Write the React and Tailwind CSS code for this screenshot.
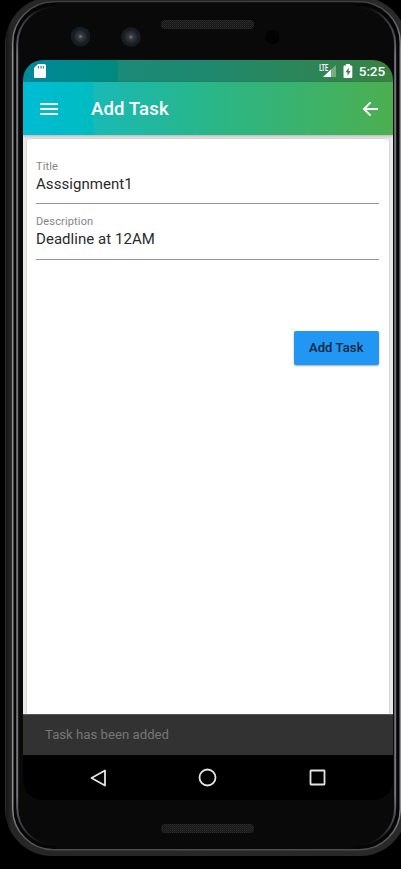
import React from "react";

function Bezel() {
  return (
    <svg className="absolute inset-0" width="401" height="869" viewBox="0 0 401 869" fill="none" aria-hidden="true">
      <defs>
        <linearGradient id="shell" x1="5" x2="411" y1="0" y2="0" gradientUnits="userSpaceOnUse">
          <stop offset="0" stopColor="#303030" />
          <stop offset="0.004" stopColor="#171717" />
          <stop offset="0.016" stopColor="#262626" />
          <stop offset="0.98" stopColor="#292929" />
          <stop offset="1" stopColor="#161616" />
        </linearGradient>
        <linearGradient id="rim" x1="0" x2="0" y1="0" y2="855" gradientUnits="userSpaceOnUse">
          <stop offset="0" stopColor="#3c3c3c" />
          <stop offset="0.01" stopColor="#4a4a4a" />
          <stop offset="0.06" stopColor="#929292" />
          <stop offset="0.94" stopColor="#929292" />
          <stop offset="0.985" stopColor="#555555" />
          <stop offset="1" stopColor="#484848" />
        </linearGradient>
        <linearGradient id="glass" x1="0" x2="0" y1="6" y2="846" gradientUnits="userSpaceOnUse">
          <stop offset="0" stopColor="#55555f" stopOpacity="0" />
          <stop offset="0.015" stopColor="#55555f" stopOpacity="0.6" />
          <stop offset="0.06" stopColor="#74747e" />
          <stop offset="0.94" stopColor="#74747e" />
          <stop offset="0.98" stopColor="#55555f" stopOpacity="0.6" />
          <stop offset="1" stopColor="#55555f" stopOpacity="0" />
        </linearGradient>
        <radialGradient id="lens">
          <stop offset="0" stopColor="#777b80" />
          <stop offset="0.25" stopColor="#35383d" />
          <stop offset="0.55" stopColor="#272a2e" />
          <stop offset="0.7" stopColor="#191e24" />
          <stop offset="1" stopColor="#141c23" />
        </radialGradient>
        <pattern id="mesh" width="2" height="2" patternUnits="userSpaceOnUse">
          <rect width="2" height="2" fill="#181818" />
          <rect width="1" height="1" fill="#2c2c2c" />
          <rect x="1" y="1" width="1" height="1" fill="#222222" />
        </pattern>
      </defs>
      <rect x="5" y="-3" width="402" height="859" rx="47" fill="url(#shell)" />
      <rect x="12.7" y="1.7" width="387.6" height="848" rx="41" fill="#050505" stroke="url(#rim)" strokeWidth="1.5" />
      <rect x="17.2" y="6.5" width="378" height="839" rx="38" fill="#090909" stroke="url(#glass)" strokeWidth="2" />
      <path d="M55 2.5H355V10H55zM55 840H355V849H55z" fill="#090909" />
      <circle cx="80.500" cy="36.500" r="9.800" fill="url(#lens)" />
      <circle cx="131" cy="37" r="9.800" fill="url(#lens)" />
      <circle cx="272.500" cy="37" r="7" fill="#020204" />
      <rect x="161" y="20" width="93" height="9" rx="4" fill="url(#mesh)" />
      <rect x="161" y="824" width="93" height="9" rx="4" fill="url(#mesh)" />
    </svg>
  );
}

function StatusBar() {
  return (
    <div className="flex h-[22px] shrink-0 items-center bg-[linear-gradient(90deg,#00899b_0%,#008a7e_25.5%,#1b8a79_25.6%,#1f896e_50%,#388243_100%)] pr-2 pl-[11px]">
      <svg width="12" height="14" viewBox="0 0 12 14">
        <path d="M4 0h6.500Q12 0 12 1.500v11Q12 14 10.500 14h-9Q0 14 0 12.500V4z" fill="#fff" />
        <path d="M4.500 2v2.500M7 2v2.500M9.300 2v2.500" stroke="#238b91" strokeWidth="1.100" />
      </svg>
      <svg className="ml-auto" width="18" height="14" viewBox="0 0 18 14">
        <path d="M17 1v12H4z" fill="#78ad84" />
        <path d="M12 5.600V13H4z" fill="#fff" />
        <path d="M0 0h9.500v7H0z" fill="#2f8556" />
        <text x="0.200" y="6.800" fill="#fff" fontFamily="Roboto, sans-serif" fontSize="9" fontWeight="700" textLength="9" lengthAdjust="spacingAndGlyphs">LTE</text>
      </svg>
      <svg className="ml-[6px]" width="10" height="14" viewBox="0 0 10 14">
        <path d="M3 0h4v1.400h1.300q1 0 1 1V13q0 1-1 1H1.500q-1 0-1-1V2.400q0-1 1-1H3z" fill="#fff" />
        <path d="M5.800 3.500L2.500 8.300h2v3.600L7.600 7h-2z" fill="#348450" />
      </svg>
      <span className="ml-[6px] text-[13.5px] leading-[22px] font-medium tracking-[-0.1px] text-white">5:25</span>
    </div>
  );
}

function Header() {
  return (
    <header className="relative z-10 flex h-[53px] shrink-0 items-center bg-[linear-gradient(90deg,#00bcd4_0%,#00bcc0_19%,#19b9b5_19.1%,#29b689_50%,#4caf50_100%)] pr-[14px] pl-[17px] shadow-[0_1px_3px_rgba(0,0,0,0.25)]">
      <svg width="18" height="12" viewBox="0 0 18 12">
        <path d="M0 1h18M0 6h18M0 11h18" stroke="#fff" strokeWidth="1.900" />
      </svg>
      <h1 className="ml-[33px] text-[18.6px] leading-6 font-medium tracking-[0.1px] text-white">Add Task</h1>
      <svg className="ml-auto" width="17" height="16" viewBox="0 0 17 16" fill="none">
        <path d="M16 8H2.500M8.600 1.400L2 8l6.600 6.600" stroke="#fff" strokeWidth="1.900" />
      </svg>
    </header>
  );
}

function Field({ label, value, labelClass, valueClass }) {
  return (
    <label className="block h-[55px]">
      <span className={"block text-[11px] leading-[14px] text-[#858585] " + labelClass}>{label}</span>
      <span className={"block border-b border-[#949494] text-[15px] leading-[20px] text-[#2b2b2b] " + valueClass}>{value}</span>
    </label>
  );
}

export default function App() {
  return (
    <div className="relative h-[869px] w-[401px] overflow-hidden bg-black font-['Roboto',sans-serif]">
      <Bezel />
      <main className="relative mt-[60px] ml-[23px] flex h-[740px] w-[370px] flex-col overflow-hidden rounded-[20px]">
        <StatusBar />
        <Header />
        <div className="flex flex-1 flex-col bg-[#e9e9e9] pt-1 pr-[4px] pl-[3.5px]">
          <section className="flex-1 rounded-t-[3px] bg-white pt-[21px] pr-[10px] pl-[9.5px] shadow-[0_0_2px_rgba(0,0,0,0.25)]">
            <Field label="Title" value="Asssignment1" labelClass="tracking-[0.1px]" valueClass="h-[30px] tracking-[0.05px]" />
            <Field label="Description" value="Deadline at 12AM" labelClass="tracking-[0.15px]" valueClass="h-[31px] tracking-[0.05px]" />
            <button className="mt-[61px] ml-auto block h-[34px] w-[85.5px] rounded-[2px] bg-[#2196f3] text-[13px] font-medium tracking-[0.1px] text-[#10243a] shadow-[0_1px_2px_rgba(0,0,0,0.35)]">Add Task</button>
          </section>
        </div>
        <div className="relative flex h-[41px] shrink-0 items-center border-t border-[#555] bg-[#323232] pl-[22px] text-[13.2px] text-[#767676]">Task has been added</div>
        <nav className="flex h-[45px] shrink-0 items-center bg-black pr-[67px] pl-[67px]">
          <svg width="16" height="18" viewBox="0 0 16 18" fill="none">
            <path d="M15 1.500v15L1.500 9z" stroke="#e4e4e4" strokeWidth="1.800" strokeLinejoin="round" />
          </svg>
          <svg className="mx-auto" width="19" height="19" viewBox="0 0 19 19" fill="none">
            <circle cx="9.500" cy="9.500" r="8" stroke="#e4e4e4" strokeWidth="1.800" />
          </svg>
          <svg width="17" height="17" viewBox="0 0 17 17" fill="none">
            <rect x="1.500" y="1.500" width="14" height="14" rx="0.500" stroke="#e4e4e4" strokeWidth="1.800" />
          </svg>
        </nav>
      </main>
    </div>
  );
}
